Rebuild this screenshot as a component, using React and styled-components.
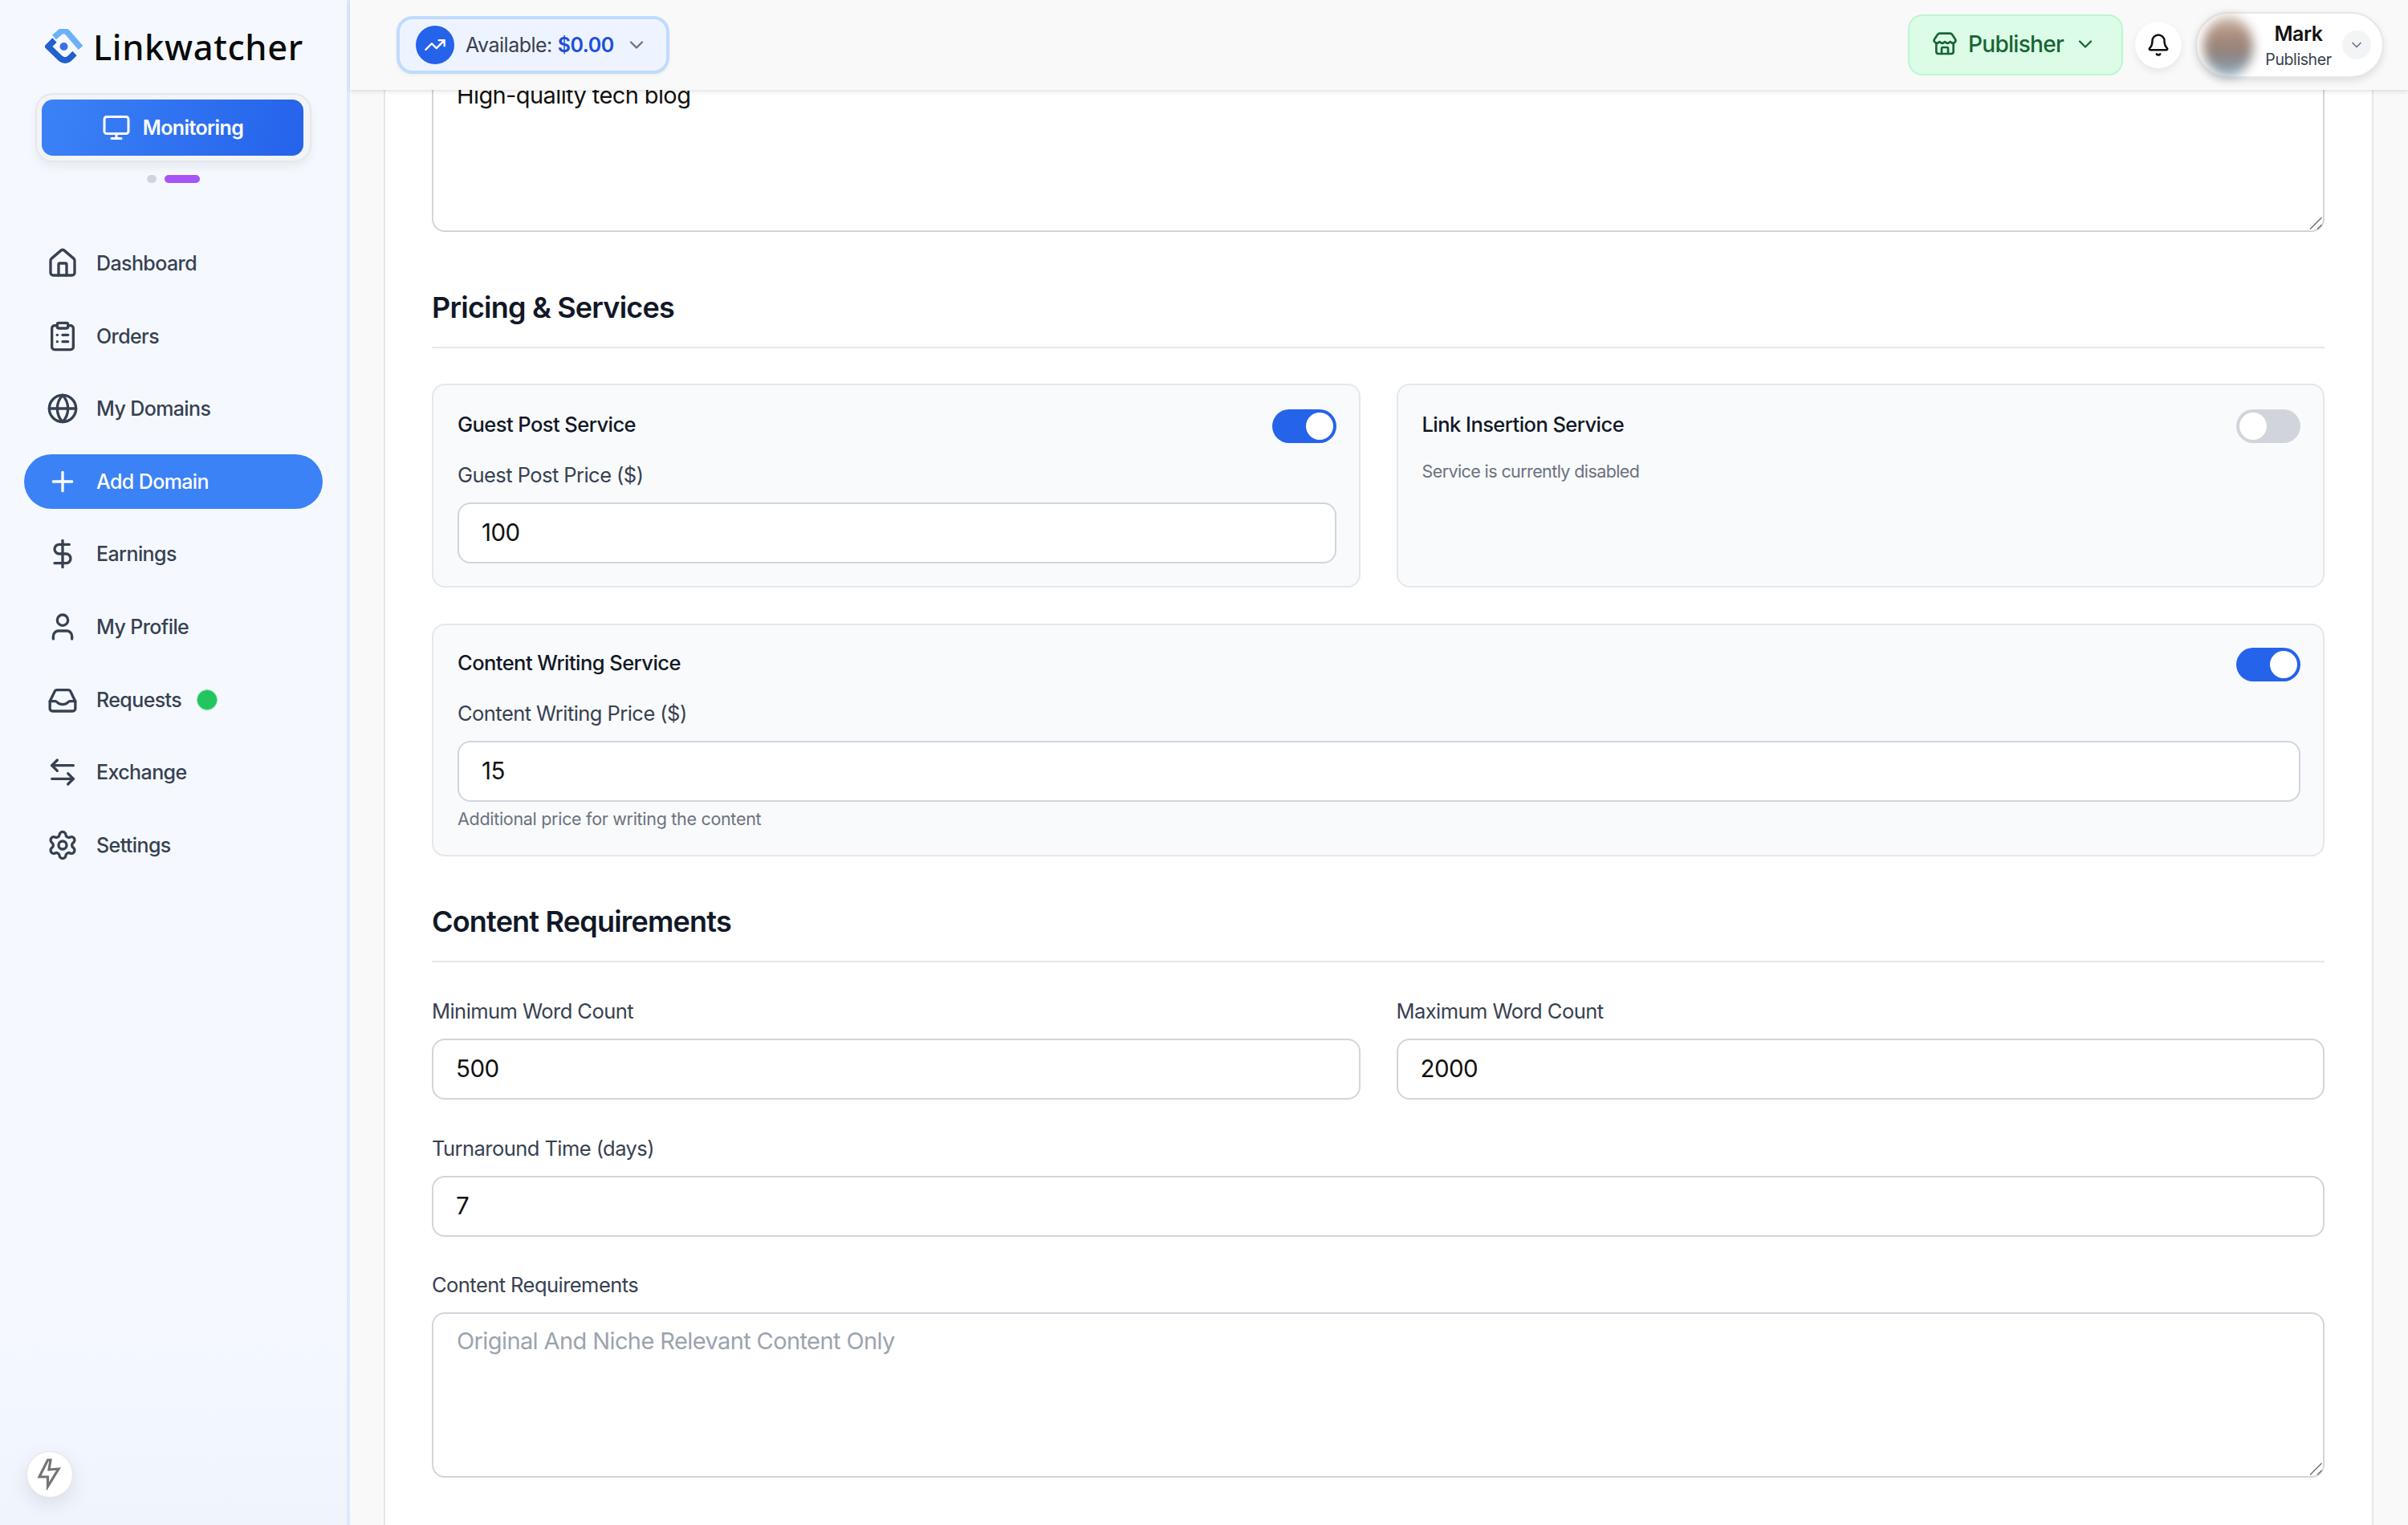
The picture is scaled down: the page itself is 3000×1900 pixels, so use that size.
import React from 'react';
import styled, { createGlobalStyle } from 'styled-components';
import {
  Bell,
  ChevronDown,
  ClipboardList,
  DollarSign,
  Globe,
  Home,
  ArrowLeftRight,
  Monitor,
  Plus,
  Settings,
  Store,
  TrendingUp,
  User,
} from 'lucide-react';

const GlobalStyle = createGlobalStyle`
  html, body {
    margin: 0;
    padding: 0;
    background: #f9f9f9;
  }
  body {
    font-family: Inter, "Liberation Sans", sans-serif;
    color: #111827;
  }
  * {
    box-sizing: border-box;
  }
`;

const Page = styled.div`
  display: flex;
  width: 3000px;
  height: 1900px;
  overflow: hidden;
`;

/* ---------- sidebar ---------- */

const Sidebar = styled.aside`
  position: relative;
  flex: 0 0 436px;
  height: 100%;
  display: flex;
  flex-direction: column;
  padding: 0 30px;
  background: linear-gradient(180deg, #f5f9ff 0%, #f5f9ff 85%, #f0f4fd 100%);
  border-right: 4px solid #dbeafe;
`;

const Brand = styled.div`
  display: flex;
  align-items: center;
  gap: 12px;
  height: 116px;
  padding: 0 0 0 26px;
`;

const BrandName = styled.div`
  font-family: "Noto Sans", sans-serif;
  font-size: 43.5px;
  font-weight: 500;
  letter-spacing: 0.6px;
  color: #0a0a0a;
`;

const ModeFrame = styled.div`
  margin: 0 14px;
  padding: 6px 8px 6px 6px;
  height: 86px;
  border: 2px solid #e5e7eb;
  border-radius: 22px;
  background: #f3f4f6;
  box-shadow: 0 6px 12px rgba(0, 0, 0, 0.06);
`;

const ModeButton = styled.div`
  display: flex;
  align-items: center;
  justify-content: center;
  gap: 15px;
  height: 70px;
  border-radius: 14px;
  background: linear-gradient(100deg, #3b82f6, #2563eb);
  color: #fff;
  font-size: 25px;
  font-weight: 600;
  letter-spacing: -0.6px;
`;

const Pager = styled.div`
  display: flex;
  justify-content: center;
  gap: 10px;
  margin-top: 16px;
`;

const PagerDot = styled.span`
  width: ${(p) => (p.$active ? '44px' : '12px')};
  height: 10px;
  border-radius: 6px;
  background: ${(p) => (p.$active ? '#a855f7' : '#d1d5db')};
`;

const Nav = styled.nav`
  display: flex;
  flex-direction: column;
  gap: 22.6px;
  margin-top: 66px;
`;

const NavItem = styled.div`
  display: flex;
  align-items: center;
  gap: 22px;
  height: 68px;
  padding-left: 28px;
  border-radius: 34px;
  font-size: 25px;
  font-weight: 500;
  letter-spacing: -0.6px;
  color: ${(p) => (p.$active ? '#fff' : '#374151')};
  background: ${(p) => (p.$active ? '#3b82f6' : 'transparent')};
`;

const NavIcon = styled.span`
  display: flex;
  width: 40px;
  justify-content: center;
`;

const GreenDot = styled.span`
  width: 26px;
  height: 26px;
  margin-left: -3px;
  border-radius: 50%;
  background: #22c55e;
  border: 1px solid #86e3a8;
`;

const BoltButton = styled.div`
  position: absolute;
  left: 33px;
  bottom: 34px;
  display: flex;
  align-items: center;
  justify-content: center;
  width: 58px;
  height: 58px;
  border-radius: 50%;
  background: #fff;
  border: 1px solid #e5e5e5;
  box-shadow: 0 8px 24px rgba(0, 0, 0, 0.1);
`;

/* ---------- top bar ---------- */

const Content = styled.div`
  flex: 1;
  min-width: 0;
  display: flex;
  flex-direction: column;
  height: 100%;
`;

const TopBar = styled.header`
  position: relative;
  z-index: 2;
  flex: 0 0 112px;
  display: flex;
  align-items: center;
  padding: 0 30px 0 58px;
  background: #f9f9f9;
  box-shadow: 0 2px 5px rgba(0, 0, 0, 0.12);
`;

const BalancePill = styled.div`
  display: flex;
  align-items: center;
  height: 72px;
  width: 340px;
  padding-left: 20px;
  border: 4px solid #bfdbfe;
  border-radius: 20px;
  background: #eef4ff;
  font-size: 25px;
  letter-spacing: -0.5px;
  color: #374151;
  box-shadow: 0 2px 4px rgba(0, 0, 0, 0.05);
`;

const BalanceIcon = styled.span`
  display: flex;
  align-items: center;
  justify-content: center;
  width: 48px;
  height: 48px;
  margin-right: 14px;
  border-radius: 50%;
  background: #2563eb;
  color: #fff;
`;

const BalanceValue = styled.b`
  margin-left: 7px;
  margin-right: 14px;
  font-weight: 600;
  color: #1d4ed8;
`;

const TopActions = styled.div`
  display: flex;
  align-items: center;
  margin-left: auto;
`;

const RoleButton = styled.div`
  display: flex;
  align-items: center;
  gap: 13px;
  width: 268px;
  height: 76px;
  padding: 0 0 3px 28px;
  border: 2px solid #bbf7d0;
  border-radius: 18px;
  background: #dcfce7;
  color: #166534;
  font-size: 28px;
  font-weight: 500;
  letter-spacing: -0.7px;
`;

const BellButton = styled.div`
  display: flex;
  align-items: center;
  justify-content: center;
  width: 58px;
  height: 58px;
  margin: 0 17px 0 15px;
  border-radius: 50%;
  background: #fff;
  box-shadow: 0 4px 10px rgba(0, 0, 0, 0.08);
  color: #111;
`;

const UserPill = styled.div`
  position: relative;
  display: flex;
  align-items: center;
  width: 235px;
  height: 82px;
  padding-left: 76px;
  border: 2px solid #e5e7eb;
  border-radius: 41px;
  background: #fff;
  box-shadow: 0 4px 10px rgba(0, 0, 0, 0.1);
`;

/* photo is blurred out in the source, so a blurred gradient stands in for it */
const Avatar = styled.div`
  position: absolute;
  left: 8px;
  top: 4px;
  width: 62px;
  height: 74px;
  border-radius: 50%;
  filter: blur(7px);
  background: linear-gradient(180deg, #c9b8a6 0%, #a8887a 35%, #8c8480 65%, #8fa3b3 90%);
`;

const UserText = styled.div`
  flex: 1;
  display: flex;
  flex-direction: column;
  align-items: center;
  gap: 5px;
`;

const UserName = styled.div`
  font-size: 25px;
  line-height: 30px;
  font-weight: 600;
  letter-spacing: -0.5px;
  color: #111;
`;

const UserRole = styled.div`
  font-size: 19.5px;
  line-height: 24px;
  letter-spacing: -0.4px;
  color: #374151;
`;

const UserCaret = styled.span`
  display: flex;
  align-items: center;
  justify-content: center;
  width: 36px;
  height: 36px;
  margin: 0 14px 0 4px;
  border-radius: 50%;
  background: #f3f4f6;
  color: #6b7280;
`;

/* ---------- form ---------- */

const Scroller = styled.main`
  flex: 1;
  min-height: 0;
  overflow: hidden;
  padding: 0 43px 0 42px;
`;

const FormCard = styled.section`
  min-height: 100%;
  height: 2000px;
  padding: 0 59px 0 58px;
  background: #fff;
  border-left: 2px solid #e5e7eb;
  border-right: 2px solid #e5e7eb;
`;

// page is scrolled: the first textarea starts above the bar
const ScrolledForm = styled.div`
  margin-top: -29px;
`;

const TextAreaWrap = styled.div`
  position: relative;
`;

const TextArea = styled.textarea`
  display: block;
  width: 100%;
  height: 206px;
  padding: 16px 29px;
  border: 2px solid #d1d5db;
  border-radius: 16px;
  background: #fff;
  outline: none;
  resize: none;
  font-family: inherit;
  font-size: 29px;
  line-height: 36px;
  letter-spacing: -0.6px;
  color: #111;
  &::placeholder {
    color: #9ca3af;
    opacity: 1;
  }
`;

const Grip = styled.svg`
  position: absolute;
  right: 3px;
  bottom: 3px;
`;

const SectionTitle = styled.h2`
  margin: ${(p) => p.$top}px 0 0;
  height: 73px;
  padding-bottom: 27px;
  border-bottom: 2px solid #e5e7eb;
  font-size: 36px;
  line-height: 44px;
  font-weight: 600;
  letter-spacing: -0.8px;
  color: #111827;
`;

const ServiceGrid = styled.div`
  display: grid;
  grid-template-columns: 1fr 1fr;
  gap: 45px;
  margin-top: 44px;
`;

const ServiceCard = styled.div`
  grid-column: ${(p) => (p.$wide ? '1 / -1' : 'auto')};
  height: ${(p) => p.$height}px;
  padding: ${(p) => (p.$wide ? '28px' : '30px')} 28px 30px 30px;
  border: 2px solid #e5e7eb;
  border-radius: 16px;
  background: #f9fafb;
`;

const ServiceHead = styled.div`
  display: flex;
  align-items: center;
  justify-content: space-between;
  height: 42px;
  margin-bottom: 25px;
`;

const ServiceName = styled.div`
  padding-bottom: 5px;
  font-size: 25.5px;
  font-weight: 500;
  letter-spacing: -0.55px;
  color: #111827;
`;

const Switch = styled.span`
  display: flex;
  align-items: center;
  justify-content: ${(p) => (p.$on ? 'flex-end' : 'flex-start')};
  width: 80px;
  height: 42px;
  padding: 4px;
  border-radius: 21px;
  background: ${(p) => (p.$on ? '#2563eb' : '#d1d5db')};
  &::after {
    content: '';
    width: 34px;
    height: 34px;
    border-radius: 50%;
    background: #fff;
  }
`;

const Field = styled.div`
  margin-top: ${(p) => p.$top || 0}px;
`;

const Label = styled.div`
  height: 30px;
  margin-bottom: 19px;
  font-size: 25.5px;
  line-height: 30px;
  letter-spacing: -0.55px;
  color: #374151;
`;

const Input = styled.input`
  display: block;
  width: 100%;
  height: 76px;
  padding: 0 28px 3px;
  border: 2px solid #d1d5db;
  border-radius: 16px;
  background: #fff;
  outline: none;
  font-family: inherit;
  font-size: 29.5px;
  letter-spacing: -0.55px;
  color: #111;
`;

const Hint = styled.div`
  margin-top: ${(p) => p.$top}px;
  font-size: 21.5px;
  line-height: 26px;
  letter-spacing: ${(p) => p.$spacing}px;
  color: #6b7280;
`;

const FieldGrid = styled.div`
  display: grid;
  grid-template-columns: 1fr 1fr;
  gap: 45px;
  margin-top: 46px;
`;

const LinkwatcherLogo = () => (
  <svg width="48" height="44" viewBox="56 36 48 44" fill="none">
    <path
      d="M67.5 46.5 L75 40 Q80 36.5 84.5 41 L100.5 59.5"
      stroke="#6cb0f7"
      strokeWidth="7.5"
    />
    <path
      d="M68 50 L60 58 L75 72.5 Q81 77.5 86.5 73 L93 66.5"
      stroke="#2060d0"
      strokeWidth="7.5"
    />
    <circle cx="79.5" cy="58" r="5" fill="#3b6fe8" />
  </svg>
);

const TrayIcon = () => (
  <svg width="40" height="40" viewBox="0 0 24 24" fill="none" stroke="#374151" strokeWidth="2" strokeLinecap="round" strokeLinejoin="round">
    <path d="M2.5 13 6 5.8A2 2 0 0 1 7.8 4.6h8.4A2 2 0 0 1 18 5.8l3.5 7.2v5.4a2 2 0 0 1-2 2h-15a2 2 0 0 1-2-2z" />
    <path d="M2.5 13h4.2c1.2 0 1.6 2.4 5.3 2.4s4.1-2.4 5.3-2.4h4.2" />
  </svg>
);

const BoltIcon = () => (
  <svg width="32" height="40" viewBox="0 0 32 40" fill="none" stroke="#757575" strokeWidth="3.2" strokeLinejoin="miter">
    <path d="M13.5 2 H17 L15 14 L27 13 L13.5 35 V23 H3 Z" />
  </svg>
);

const ResizeGrip = () => (
  <Grip width="16" height="16" viewBox="0 0 16 16" fill="none" stroke="#666" strokeWidth="1.3">
    <path d="M1 15.5 15.5 1" />
    <path d="M10 15.5 15.5 10" />
  </Grip>
);

const navItems = [
  { label: 'Dashboard', Icon: Home },
  { label: 'Orders', Icon: ClipboardList },
  { label: 'My Domains', Icon: Globe },
  { label: 'Add Domain', Icon: Plus, active: true },
  { label: 'Earnings', Icon: DollarSign },
  { label: 'My Profile', Icon: User },
  { label: 'Requests', Icon: TrayIcon, dot: true },
  { label: 'Exchange', Icon: ArrowLeftRight },
  { label: 'Settings', Icon: Settings },
];

const App = () => (
  <Page>
    <GlobalStyle />
    <Sidebar>
      <Brand>
        <LinkwatcherLogo />
        <BrandName>Linkwatcher</BrandName>
      </Brand>
      <ModeFrame>
        <ModeButton>
          <Monitor size={36} strokeWidth={2} />
          Monitoring
        </ModeButton>
      </ModeFrame>
      <Pager>
        <PagerDot />
        <PagerDot $active />
      </Pager>
      <Nav>
        {navItems.map(({ label, Icon, active, dot }) => (
          <NavItem key={label} $active={active}>
            <NavIcon>
              <Icon size={40} strokeWidth={2} />
            </NavIcon>
            {label}
            {dot && <GreenDot />}
          </NavItem>
        ))}
      </Nav>
      <BoltButton>
        <BoltIcon />
      </BoltButton>
    </Sidebar>

    <Content>
      <TopBar>
        <BalancePill>
          <BalanceIcon>
            <TrendingUp size={28} strokeWidth={2} />
          </BalanceIcon>
          Available:
          <BalanceValue>$0.00</BalanceValue>
          <ChevronDown size={28} color="#6b7280" />
        </BalancePill>
        <TopActions>
          <RoleButton>
            <Store size={32} strokeWidth={2} />
            Publisher
            <ChevronDown size={28} />
          </RoleButton>
          <BellButton>
            <Bell size={30} strokeWidth={2} />
          </BellButton>
          <UserPill>
            <Avatar />
            <UserText>
              <UserName>Mark</UserName>
              <UserRole>Publisher</UserRole>
            </UserText>
            <UserCaret>
              <ChevronDown size={20} />
            </UserCaret>
          </UserPill>
        </TopActions>
      </TopBar>

      <Scroller>
        <FormCard>
          <ScrolledForm>
            <TextAreaWrap>
              <TextArea readOnly defaultValue="High-quality tech blog" />
              <ResizeGrip />
            </TextAreaWrap>

            <SectionTitle $top={72}>Pricing &amp; Services</SectionTitle>
            <ServiceGrid>
              <ServiceCard $height={254}>
                <ServiceHead>
                  <ServiceName>Guest Post Service</ServiceName>
                  <Switch $on />
                </ServiceHead>
                <Label>Guest Post Price ($)</Label>
                <Input readOnly value="100" />
              </ServiceCard>
              <ServiceCard $height={254}>
                <ServiceHead>
                  <ServiceName>Link Insertion Service</ServiceName>
                  <Switch />
                </ServiceHead>
                <Hint $top={-3} $spacing={-0.6}>Service is currently disabled</Hint>
              </ServiceCard>
              <ServiceCard $wide $height={290}>
                <ServiceHead>
                  <ServiceName>Content Writing Service</ServiceName>
                  <Switch $on />
                </ServiceHead>
                <Label>Content Writing Price ($)</Label>
                <Input readOnly value="15" />
                <Hint $top={8} $spacing={-0.3}>Additional price for writing the content</Hint>
              </ServiceCard>
            </ServiceGrid>

            <SectionTitle $top={59}>Content Requirements</SectionTitle>
            <FieldGrid>
              <Field>
                <Label>Minimum Word Count</Label>
                <Input readOnly value="500" />
              </Field>
              <Field>
                <Label>Maximum Word Count</Label>
                <Input readOnly value="2000" />
              </Field>
            </FieldGrid>
            <Field $top={46}>
              <Label>Turnaround Time (days)</Label>
              <Input readOnly value="7" />
            </Field>
            <Field $top={45}>
              <Label>Content Requirements</Label>
              <TextAreaWrap>
                <TextArea readOnly placeholder="Original And Niche Relevant Content Only" />
                <ResizeGrip />
              </TextAreaWrap>
            </Field>
          </ScrolledForm>
        </FormCard>
      </Scroller>
    </Content>
  </Page>
);

export default App;
